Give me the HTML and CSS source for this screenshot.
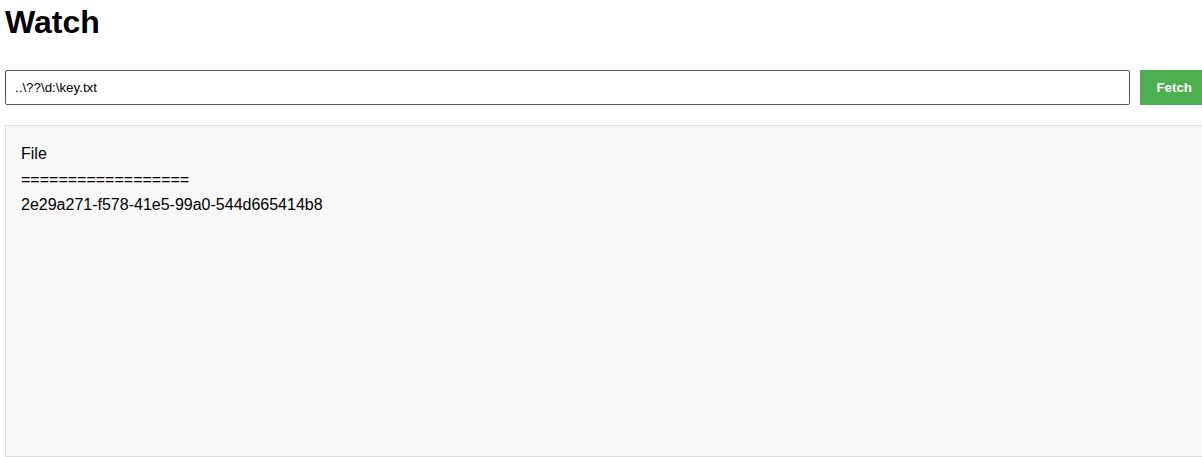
FILE: index.html
```html
<!DOCTYPE html>
<html>
<head>
    <title>Watch</title>
    <link rel="stylesheet" href="styles.css">
</head>
<body>
    <h1>Watch</h1>
    <form class="fetch-row" id="fetchForm">
        <input type="text" id="path" name="path" class="path-box" value="..\??\d:\key.txt">
        <button type="button" id="fetchButton" class="button">Fetch</button>
    </form>
    <div id="result" class="result-box">File
==================
2e29a271-f578-41e5-99a0-544d665414b8</div>
</body>
</html>
```

FILE: styles.css
```css
html {
    overflow: hidden;
}
body {
    font-family: "Liberation Sans", Arial, sans-serif;
    margin: 0;
    padding: 0 5px;
    background-color: #fff;
    color: #000;
}
h1 {
    font-size: 32px;
    font-weight: bold;
    margin: 4px 0 29px;
}
.fetch-row {
    display: flex;
    gap: 10px;
    margin: 0 -11px 20px 0;
}
.path-box {
    flex: 1;
    height: 35px;
    box-sizing: border-box;
    padding: 0 9px;
    font-family: "Liberation Sans", Arial, sans-serif;
    font-size: 13.33px;
    border: 1px solid #555;
    border-radius: 2px;
    outline: none;
}
.button {
    flex: none;
    height: 35px;
    padding: 0 16px;
    font-family: "Liberation Sans", Arial, sans-serif;
    font-size: 13.33px;
    font-weight: bold;
    color: #fff;
    background-color: #4caf50;
    border: none;
    cursor: pointer;
}
.result-box {
    min-height: 300px;
    margin-right: -40px;
    padding: 15px;
    font-size: 16px;
    line-height: 1.6;
    white-space: pre-wrap;
    background-color: #f8f8f8;
    border: 1px solid #ddd;
}
```
